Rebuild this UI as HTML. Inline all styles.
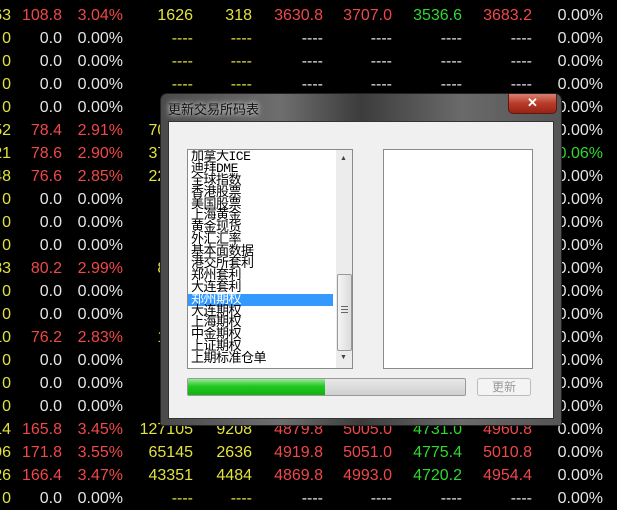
<!DOCTYPE html>
<html><head><meta charset="utf-8"><style>
body{margin:0;width:617px;height:506px;background:#000;overflow:hidden;position:relative;font-family:"Liberation Sans","Noto Sans CJK SC",sans-serif}
.r{position:absolute;left:0;width:617px;height:23px;font-size:16px;line-height:23px}
.r span{position:absolute;white-space:nowrap}
.r span:nth-child(1){right:606px}.r span:nth-child(2){right:555px}.r span:nth-child(3){right:494px}
.r span:nth-child(4){right:424px}.r span:nth-child(5){right:365px}.r span:nth-child(6){right:294px}
.r span:nth-child(7){right:225px}.r span:nth-child(8){right:155px}.r span:nth-child(9){right:85px}
.r span:nth-child(10){right:14px}
.y{color:#e2e23c}.w{color:#e6e6e6}.d{color:#f04848}.g{color:#2ed82e}
#dlg{position:absolute;left:161px;top:94px;width:400px;height:331px;border-radius:6px 6px 2px 2px;
background:linear-gradient(90deg,#4a4a4a,#6e6e6e 30%,#3c3c3c 50%,#6a6a6a 75%,#555);box-shadow:0 0 0 1px #222}
#tt{position:absolute;left:7px;top:5px;font-size:13px;color:#111;text-shadow:0 0 8px #ccc,0 0 4px #ddd}
#cl{position:absolute;left:347px;top:0;width:47px;height:19px;border-radius:0 0 5px 5px;background:linear-gradient(#d88070,#b83a28 50%,#982414);border:1px solid #5a1a10;border-top:none;color:#fff;font-size:13px;font-weight:bold;text-align:center;line-height:18px}
#cli{position:absolute;left:7px;top:27px;width:384px;height:296px;background:#f0f0f0;border:1px solid #333}
#list{position:absolute;left:26px;top:55px;width:164px;height:218px;background:#fff;border:1px solid #8a8a8a;overflow:hidden}
#list .it{height:11.9px;line-height:11.9px;font-size:13px;padding-left:3px;letter-spacing:-0.5px;white-space:nowrap;font-family:"Liberation Mono","WenQuanYi Zen Hei",monospace;color:#000}
#list .it:first-child{margin-top:1px}
#list .it.s{background:#3399ff;color:#fff;width:142px}
#sb{position:absolute;right:0;top:0;width:16px;height:218px;background:#ececec}
#th{position:absolute;left:1px;top:124px;width:13px;height:75px;border:1px solid #999;border-radius:2px;background:linear-gradient(90deg,#f4f4f4,#dcdcdc)}
#rb{position:absolute;left:222px;top:55px;width:148px;height:218px;background:#fff;border:1px solid #8a8a8a}
#pb{position:absolute;left:26px;top:284px;width:277px;height:16px;border:1px solid #999;border-radius:2px;background:linear-gradient(#e8e8e8,#d0d0d0)}
#pg{position:absolute;left:0;top:0;width:137px;height:16px;background:linear-gradient(#9be89b,#22c822 45%,#10b010)}
#bt{position:absolute;left:316px;top:284px;width:52px;height:16px;border:1px solid #bbb;border-radius:3px;background:#f4f4f4;color:#999;font-size:12px;text-align:center;line-height:16px}
</style></head><body>
<div class="r" style="top:4px"><span class="y">63</span><span class="d">108.8</span><span class="d">3.04%</span><span class="y">1626</span><span class="y">318</span><span class="d">3630.8</span><span class="d">3707.0</span><span class="g">3536.6</span><span class="d">3683.2</span><span class="w">0.00%</span></div>
<div class="r" style="top:27px"><span class="y">0</span><span class="w">0.0</span><span class="w">0.00%</span><span class="y">----</span><span class="y">----</span><span class="w">----</span><span class="w">----</span><span class="w">----</span><span class="w">----</span><span class="w">0.00%</span></div>
<div class="r" style="top:50px"><span class="y">0</span><span class="w">0.0</span><span class="w">0.00%</span><span class="y">----</span><span class="y">----</span><span class="w">----</span><span class="w">----</span><span class="w">----</span><span class="w">----</span><span class="w">0.00%</span></div>
<div class="r" style="top:73px"><span class="y">0</span><span class="w">0.0</span><span class="w">0.00%</span><span class="y">----</span><span class="y">----</span><span class="w">----</span><span class="w">----</span><span class="w">----</span><span class="w">----</span><span class="w">0.00%</span></div>
<div class="r" style="top:96px"><span class="y">0</span><span class="w">0.0</span><span class="w">0.00%</span><span></span><span></span><span></span><span></span><span></span><span></span><span class="w">0.00%</span></div>
<div class="r" style="top:119px"><span class="y">52</span><span class="d">78.4</span><span class="d">2.91%</span><span class="y">70000</span><span></span><span></span><span></span><span></span><span></span><span class="w">0.00%</span></div>
<div class="r" style="top:142px"><span class="y">21</span><span class="d">78.6</span><span class="d">2.90%</span><span class="y">37000</span><span></span><span></span><span></span><span></span><span></span><span class="g">0.06%</span></div>
<div class="r" style="top:165px"><span class="y">48</span><span class="d">76.6</span><span class="d">2.85%</span><span class="y">22000</span><span></span><span></span><span></span><span></span><span></span><span class="w">0.00%</span></div>
<div class="r" style="top:188px"><span class="y">0</span><span class="w">0.0</span><span class="w">0.00%</span><span></span><span></span><span></span><span></span><span></span><span></span><span class="w">0.00%</span></div>
<div class="r" style="top:211px"><span class="y">0</span><span class="w">0.0</span><span class="w">0.00%</span><span></span><span></span><span></span><span></span><span></span><span></span><span class="w">0.00%</span></div>
<div class="r" style="top:234px"><span class="y">0</span><span class="w">0.0</span><span class="w">0.00%</span><span></span><span></span><span></span><span></span><span></span><span></span><span class="w">0.00%</span></div>
<div class="r" style="top:257px"><span class="y">83</span><span class="d">80.2</span><span class="d">2.99%</span><span class="y">8000</span><span></span><span></span><span></span><span></span><span></span><span class="w">0.00%</span></div>
<div class="r" style="top:280px"><span class="y">0</span><span class="w">0.0</span><span class="w">0.00%</span><span></span><span></span><span></span><span></span><span></span><span></span><span class="w">0.00%</span></div>
<div class="r" style="top:303px"><span class="y">0</span><span class="w">0.0</span><span class="w">0.00%</span><span></span><span></span><span></span><span></span><span></span><span></span><span class="w">0.00%</span></div>
<div class="r" style="top:326px"><span class="y">10</span><span class="d">76.2</span><span class="d">2.83%</span><span class="y">1000</span><span></span><span></span><span></span><span></span><span></span><span class="w">0.00%</span></div>
<div class="r" style="top:349px"><span class="y">0</span><span class="w">0.0</span><span class="w">0.00%</span><span></span><span></span><span></span><span></span><span></span><span></span><span class="w">0.00%</span></div>
<div class="r" style="top:372px"><span class="y">0</span><span class="w">0.0</span><span class="w">0.00%</span><span></span><span></span><span></span><span></span><span></span><span></span><span class="w">0.00%</span></div>
<div class="r" style="top:395px"><span class="y">0</span><span class="w">0.0</span><span class="w">0.00%</span><span></span><span></span><span></span><span></span><span></span><span></span><span class="w">0.00%</span></div>
<div class="r" style="top:418px"><span class="y">14</span><span class="d">165.8</span><span class="d">3.45%</span><span class="y">127105</span><span class="y">9208</span><span class="d">4879.8</span><span class="d">5005.0</span><span class="g">4731.0</span><span class="d">4960.8</span><span class="w">0.00%</span></div>
<div class="r" style="top:441px"><span class="y">96</span><span class="d">171.8</span><span class="d">3.55%</span><span class="y">65145</span><span class="y">2636</span><span class="d">4919.8</span><span class="d">5051.0</span><span class="g">4775.4</span><span class="d">5010.8</span><span class="w">0.00%</span></div>
<div class="r" style="top:464px"><span class="y">26</span><span class="d">166.4</span><span class="d">3.47%</span><span class="y">43351</span><span class="y">4484</span><span class="d">4869.8</span><span class="d">4993.0</span><span class="g">4720.2</span><span class="d">4954.4</span><span class="w">0.00%</span></div>
<div class="r" style="top:487px"><span class="y">0</span><span class="w">0.0</span><span class="w">0.00%</span><span class="y">----</span><span class="y">----</span><span class="w">----</span><span class="w">----</span><span class="w">----</span><span class="w">----</span><span class="w">0.00%</span></div>

<div id="dlg">
  <div id="tt">更新交易所码表</div>
  <div id="cl">✕</div>
  <div id="cli"></div>
  <div id="list">
    <div class="it">加拿大ICE</div><div class="it">迪拜DME</div><div class="it">全球指数</div><div class="it">香港股票</div><div class="it">美国股票</div><div class="it">上海黄金</div><div class="it">黄金现货</div><div class="it">外汇汇率</div><div class="it">基本面数据</div><div class="it">港交所套利</div><div class="it">郑州套利</div><div class="it">大连套利</div><div class="it s">郑州期权</div><div class="it">大连期权</div><div class="it">上海期权</div><div class="it">中金期权</div><div class="it">上证期权</div><div class="it">上期标准仓单</div>
    <div id="sb"><div style="position:absolute;left:4px;top:5px;font-size:7px;color:#444">▲</div><div id="th"><div style="position:absolute;left:3px;top:31px;width:7px;height:1px;background:#666;box-shadow:0 3px #666,0 6px #666"></div></div><div style="position:absolute;left:4px;top:204px;font-size:7px;color:#444">▼</div></div>
  </div>
  <div id="rb"></div>
  <div id="pb"><div id="pg"></div></div>
  <div id="bt">更新</div>
</div>
</body></html>
